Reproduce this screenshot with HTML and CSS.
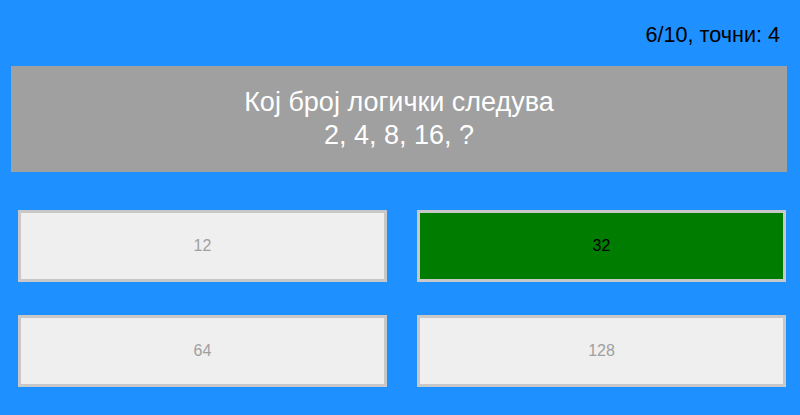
FILE: index.html
```html
<!DOCTYPE html>
<html lang="mk">
<head>
<meta charset="utf-8">
<title>Квиз</title>
<link rel="stylesheet" href="styles.css">
</head>
<body>
<div class="app">
  <header class="score">6/10, точни: 4</header>
  <section class="question">
    <p>Кој број логички следува<br>2, 4, 8, 16, ?</p>
  </section>
  <section class="answers">
    <button class="answer">12</button>
    <button class="answer correct">32</button>
    <button class="answer">64</button>
    <button class="answer">128</button>
  </section>
</div>
</body>
</html>
```
FILE: styles.css
```css
html, body {
  margin: 0;
  padding: 0;
  background: #1e90ff;
  font-family: "Liberation Sans", Arial, sans-serif;
}
.app {
  width: 800px;
  height: 415px;
  display: flex;
  flex-direction: column;
}
.score {
  padding: 22px 20px 0 0;
  height: 25px;
  line-height: 25px;
  font-size: 21.6px;
  color: #000;
  text-align: right;
  margin-bottom: 19px;
}
.question {
  margin: 0 13px 0 11px;
  height: 106px;
  background: #a0a0a0;
  display: flex;
  align-items: center;
  justify-content: center;
}
.question p {
  margin: 0;
  color: #fff;
  font-size: 27px;
  line-height: 33px;
  text-align: center;
}
.answers {
  margin-top: 38px;
  padding: 0 14px 0 18px;
  display: grid;
  grid-template-columns: 369px 369px;
  grid-auto-rows: 72px;
  column-gap: 30px;
  row-gap: 33px;
}
.answer {
  box-sizing: border-box;
  border: 3px solid #c8c8c8;
  background: #efefef;
  color: #a0a0a0;
  font-family: "Liberation Sans", Arial, sans-serif;
  font-size: 16px;
  padding: 0;
  margin: 0;
}
.answer.correct {
  background: #007c00;
  color: #000;
}
```
